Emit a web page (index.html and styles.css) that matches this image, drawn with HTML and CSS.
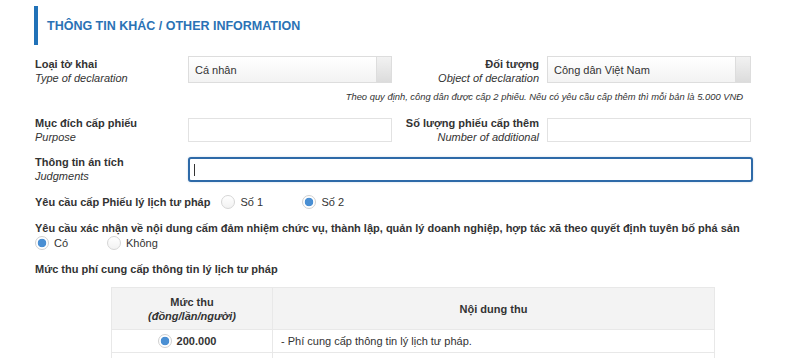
FILE: index.html
```html
<!DOCTYPE html>
<html lang="vi">
<head>
<meta charset="utf-8">
<title>Thông tin khác</title>
<link rel="stylesheet" href="styles.css">
</head>
<body>
<div class="page">
  <h2 class="title">THÔNG TIN KHÁC / OTHER INFORMATION</h2>

  <div class="grid row1">
    <div class="label"><b>Loại tờ khai</b><i>Type of declaration</i></div>
    <div class="select"><span class="sel-text">Cá nhân</span><span class="sel-btn"></span></div>
    <div class="label right"><b>Đối tượng</b><i>Object of declaration</i></div>
    <div class="select"><span class="sel-text">Công dân Việt Nam</span><span class="sel-btn"></span></div>
  </div>
  <p class="note">Theo quy định, công dân được cấp 2 phiếu. Nếu có yêu cầu cấp thêm thì mỗi bản là 5.000 VNĐ</p>

  <div class="grid row2">
    <div class="label"><b>Mục đích cấp phiếu</b><i>Purpose</i></div>
    <div class="input"></div>
    <div class="label right"><b>Số lượng phiếu cấp thêm</b><i>Number of additional</i></div>
    <div class="input"></div>
  </div>

  <div class="grid row3">
    <div class="label"><b>Thông tin án tích</b><i>Judgments</i></div>
    <div class="input focus"><span class="caret"></span></div>
  </div>

  <div class="line row4">
    <b class="strong">Yêu cầu cấp Phiếu lý lịch tư pháp</b>
    <span class="opt o1"><span class="radio"></span>Số 1</span>
    <span class="opt"><span class="radio on"></span>Số 2</span>
  </div>

  <div class="row5">
    <b class="strong">Yêu cầu xác nhận về nội dung cấm đảm nhiệm chức vụ, thành lập, quản lý doanh nghiệp, hợp tác xã theo quyết định tuyên bố phá sản</b>
    <div class="line opts">
      <span class="opt c1"><span class="radio on"></span>Có</span>
      <span class="opt"><span class="radio"></span>Không</span>
    </div>
  </div>

  <b class="strong fee">Mức thu phí cung cấp thông tin lý lịch tư pháp</b>

  <table class="fees">
    <thead>
      <tr>
        <th class="c-amt">Mức thu<br><i>(đồng/lần/người)</i></th>
        <th>Nội dung thu</th>
      </tr>
    </thead>
    <tbody>
      <tr>
        <td class="amt"><span class="radio on"></span><b>200.000</b></td>
        <td>- Phí cung cấp thông tin lý lịch tư pháp.</td>
      </tr>
      <tr class="empty"><td></td><td></td></tr>
    </tbody>
  </table>
</div>
</body>
</html>
```

FILE: styles.css
```css
* { box-sizing: border-box; }
html, body { margin: 0; padding: 0; background: #fff; }
body {
  font-family: "Liberation Sans", Arial, sans-serif;
  color: #333;
  font-size: 11px;
  overflow: hidden;
}
.page { padding: 6px 48px 0 34px; }
.title {
  margin: 0;
  height: 39px;
  border-left: 4px solid #2172b8;
  padding-left: 9px;
  display: flex;
  align-items: center;
  font-size: 12.5px;
  font-weight: bold;
  color: #2a72b5;
}
.grid {
  display: grid;
  grid-template-columns: 153px 204px 155px 204px;
  margin-left: 1px;
}
.label {
  display: flex;
  flex-direction: column;
  line-height: 14px;
  align-self: start;
}
.label b { font-weight: bold; }
.label i { font-style: italic; }
.label.right { text-align: right; padding-right: 8px; }
.row1 { margin-top: 11px; grid-template-rows: 27px; }
.row1 .label { margin-top: 1px; }
.select {
  height: 27px;
  border: 1px solid #ddd;
  background: linear-gradient(#fff, #f3f3f3);
  display: flex;
  align-items: center;
}
.sel-text { flex: 1; padding-left: 6px; color: #333; }
.sel-btn {
  width: 15px;
  align-self: stretch;
  border-left: 1px solid #ddd;
  background: linear-gradient(#f2f2f2, #dcdcdc);
}
.note {
  margin: 7px 0 0;
  text-align: right;
  padding-right: 9px;
  font-style: italic;
  font-size: 9.4px;
  line-height: 14px;
  color: #333;
}
.row2 { margin-top: 14px; grid-template-rows: 24px; }
.row2 .label { margin-top: -2px; }
.input {
  height: 24px;
  border: 1px solid #e2e2e2;
  background: #fff;
}
.row3 { margin-top: 15px; grid-template-columns: 153px 565px; grid-template-rows: 25px; }
.row3 .label { margin-top: -2px; }
.input.focus {
  border: 2px solid #2e6aa8;
  border-radius: 3px;
  height: 25px;
  display: flex;
  align-items: center;
  padding-left: 4px;
  box-shadow: 0 0 2px rgba(46,106,168,0.3);
}
.caret { width: 1px; height: 12px; background: #333; }
.strong { font-weight: bold; }
.line { display: flex; align-items: center; }
.row4 { margin-top: 12px; margin-left: 1px; height: 16px; }
.opt { display: inline-flex; align-items: center; gap: 5px; }
.o1 { margin-left: 11px; width: 81px; }
.radio {
  width: 14px;
  height: 14px;
  border-radius: 50%;
  border: 1px solid #d6d6d6;
  background: linear-gradient(#fff, #f2f2f2);
  display: inline-block;
  flex: none;
}
.radio.on {
  background: radial-gradient(circle, #4a8fd3 0 4px, #fff 4.6px);
  border-color: #d0d0d0;
}
.row5 { margin-top: 11px; margin-left: 1px; line-height: 14px; }
.opts { height: 15px; }
.c1 { width: 72px; }
.fee { display: block; margin-top: 12px; margin-left: 1px; line-height: 14px; }
.fees {
  margin: 11px 0 0 77px;
  width: 604px;
  border-collapse: collapse;
}
.fees th, .fees td { border: 1px solid #e8e8e8; }
.fees th {
  background: #f3f3f3;
  font-weight: bold;
  height: 42px;
  line-height: 14px;
  text-align: center;
}
.fees th i { font-style: italic; }
.c-amt { width: 161px; }
.fees td { height: 23px; padding: 0 8px; }
.fees td.amt { text-align: center; padding-right: 18px; }
.amt .radio { vertical-align: middle; margin-right: 5px; }
.amt b { vertical-align: middle; }
.empty td { height: 20px; }
```
